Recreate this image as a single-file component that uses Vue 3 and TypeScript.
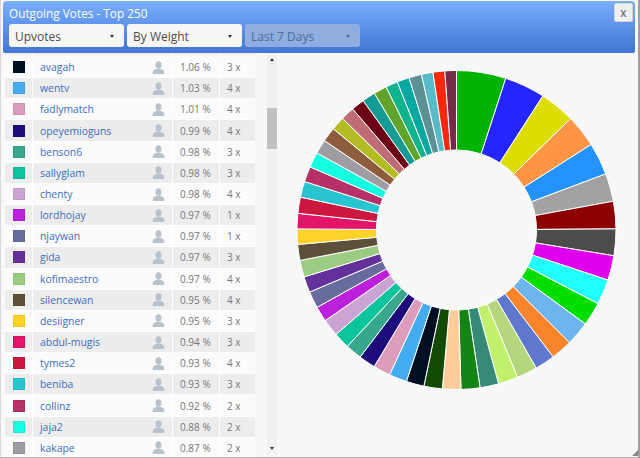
<template>
  <div class="window">
    <header class="head">
      <div class="title">Outgoing Votes - Top 250</div>
      <div class="filters">
        <div v-for="f in filters" :key="f.label" class="select" :class="{ off: f.off }">
          <span>{{ f.label }}</span>
          <i class="caret"></i>
        </div>
      </div>
      <button class="close">x</button>
    </header>
    <div class="body">
      <div class="list">
        <div class="rows">
          <div class="sliver">
            <div class="cell swatch"></div>
            <div class="cell name"></div>
            <div class="cell pct"></div>
            <div class="cell count"></div>
          </div>
          <div v-for="r in rows" :key="r.name" class="row">
            <div class="cell swatch"><i :style="{ background: r.color }"></i></div>
            <div class="cell name">
              <span>{{ r.name }}</span>
              <svg width="13" height="13" viewBox="0 0 14 14">
                <ellipse cx="7" cy="4.2" rx="3.2" ry="3.9" fill="#b9c1ca" />
                <path d="M0.8 14V11.6C0.8 10 3.4 9.2 5 8.4H9C10.6 9.2 13.2 10 13.2 11.6V14Z" fill="#b9c1ca" />
              </svg>
            </div>
            <div class="cell pct">{{ r.pct }} %</div>
            <div class="cell count">{{ r.count }} x</div>
          </div>
        </div>
        <div class="scroll">
          <i class="arrow up"></i>
          <div class="thumb"></div>
          <i class="arrow down"></i>
        </div>
      </div>
      <div class="chart">
        <svg width="360" height="405" viewBox="0 0 360 405">
          <path v-for="s in slices" :key="s.d" :d="s.d" :fill="s.color" stroke="#fff" stroke-width="1" />
        </svg>
      </div>
    </div>
    <i class="grip"></i>
  </div>
</template>

<script setup lang="ts">
const filters = [
  { label: 'Upvotes' },
  { label: 'By Weight' },
  { label: 'Last 7 Days', off: true },
];

const rows = [
  { name: 'avagah', pct: '1.06', count: 3, color: '#001022' },
  { name: 'wentv', pct: '1.03', count: 4, color: '#44acf0' },
  { name: 'fadlymatch', pct: '1.01', count: 4, color: '#dc9cbc' },
  { name: 'opeyemioguns', pct: '0.99', count: 4, color: '#1c0c7c' },
  { name: 'benson6', pct: '0.98', count: 3, color: '#38a88c' },
  { name: 'sallyglam', pct: '0.98', count: 3, color: '#0cc49c' },
  { name: 'chenty', pct: '0.98', count: 4, color: '#cca4d4' },
  { name: 'lordhojay', pct: '0.97', count: 1, color: '#bc20dc' },
  { name: 'njaywan', pct: '0.97', count: 1, color: '#686c9c' },
  { name: 'gida', pct: '0.97', count: 3, color: '#64309c' },
  { name: 'kofimaestro', pct: '0.97', count: 4, color: '#9ccc84' },
  { name: 'silencewan', pct: '0.95', count: 4, color: '#5c5038' },
  { name: 'desiigner', pct: '0.95', count: 3, color: '#ffd228' },
  { name: 'abdul-mugis', pct: '0.94', count: 3, color: '#e41468' },
  { name: 'tymes2', pct: '0.93', count: 4, color: '#cc1840' },
  { name: 'beniba', pct: '0.93', count: 3, color: '#28c4d0' },
  { name: 'collinz', pct: '0.92', count: 2, color: '#b83068' },
  { name: 'jaja2', pct: '0.88', count: 2, color: '#14ffe0' },
  { name: 'kakape', pct: '0.87', count: 2, color: '#a09ca4' },
];

// slice end angles in degrees, clockwise from the top
const parts: [number, string][] = [
  [18, '#00b300'], [32.8, '#2525ff'], [45.7, '#dddd00'], [57.6, '#ff9544'], [69.4, '#2493ff'],
  [79.6, '#a2a2a2'], [89.6, '#8c0000'], [99.3, '#4c4c4c'], [108.3, '#e000ee'], [117.5, '#20ffff'],
  [126.1, '#00df00'], [134.9, '#6db5ee'], [142.7, '#f8842c'], [150, '#5f77cc'], [157.5, '#b4d67c'],
  [164.7, '#c0f06c'], [171.5, '#348a74'], [178.4, '#148414'], [185.1, '#ffcc9c'], [191.8, '#124a04'],
  [198.3, '#001022'], [204.8, '#44acf0'], [211.1, '#dc9cbc'], [217.2, '#1c0c7c'], [223.2, '#38a88c'],
  [229.1, '#0cc49c'], [235.4, '#cca4d4'], [241, '#bc20dc'], [247.1, '#686c9c'], [252.9, '#64309c'],
  [259, '#9ccc84'], [264.8, '#5c5038'], [270.4, '#ffd228'], [276, '#e41468'], [281.9, '#cc1840'],
  [287.7, '#28c4d0'], [293.3, '#b83068'], [298.9, '#14ffe0'], [304.1, '#a09ca4'], [309.4, '#8c5c3c'],
  [314.4, '#b4bc24'], [319.4, '#c06c74'], [324.2, '#6c0014'], [329, '#149c94'], [333.8, '#60a42c'],
  [338.2, '#10b48c'], [342.7, '#04a8a0'], [347.3, '#5c9094'], [351.5, '#58bcc8'], [355.8, '#f8280c'],
  [360, '#782848'],
];

const cx = 179.5;
const cy = 177;
const outer = 159.5;
const inner = 80;

function point(r: number, deg: number) {
  const a = (deg * Math.PI) / 180;
  return `${(cx + r * Math.sin(a)).toFixed(2)} ${(cy - r * Math.cos(a)).toFixed(2)}`;
}

const slices = parts.map(([end, color], i) => {
  const start = i ? parts[i - 1][0] : 0;
  return {
    color,
    d: `M${point(outer, start)}A${outer} ${outer} 0 0 1 ${point(outer, end)}L${point(inner, end)}A${inner} ${inner} 0 0 0 ${point(inner, start)}Z`,
  };
});
</script>

<style scoped>
.window {
  position: relative;
  width: 640px;
  height: 458px;
  box-sizing: border-box;
  padding-top: 1px;
  background: #f8f8f8;
  border-left: 1px solid #d8d8d8;
  border-right: 2px solid #a0a0a0;
  border-bottom: 1px solid #b0b0b0;
  font-family: "Open Sans", sans-serif;
  overflow: hidden;
}

.head {
  position: relative;
  height: 52px;
  box-sizing: border-box;
  margin: 0 3px 0 2px;
  padding: 4px 5.5px 0;
  background: linear-gradient(#7aaeff, #4176d3);
  border-radius: 4px 4px 2px 2px;
}

.title {
  margin-left: 0.5px;
  color: #fff;
  font-size: 11.8px;
  line-height: 17px;
  height: 19px;
}

.filters {
  display: flex;
  gap: 3px;
}

.select {
  width: 115px;
  height: 23px;
  box-sizing: border-box;
  padding: 1px 6.5px 0;
  display: flex;
  align-items: center;
  justify-content: space-between;
  background: #f7f7f7;
  border-radius: 3px;
  color: #4d4d4d;
  font-size: 12px;
}

.select.off {
  background: #8fadde;
  color: #4e6c9f;
}

.caret {
  width: 0;
  height: 0;
  margin-right: 3px;
  border-left: 2.5px solid transparent;
  border-right: 2.5px solid transparent;
  border-top: 3px solid #333;
}

.off .caret {
  border-top-color: #4e6c9f;
}

.close {
  position: absolute;
  top: 2px;
  right: 2px;
  width: 19px;
  height: 19px;
  padding: 0;
  border: 1px solid #d4d4d4;
  border-radius: 2px;
  background: #f0f0f0;
  color: #555;
  font-family: "Open Sans", sans-serif;
  font-size: 12px;
  line-height: 15px;
}

.body {
  display: flex;
  height: 404px;
}

.list {
  width: 276px;
  flex: none;
  display: flex;
  overflow: hidden;
}

.rows {
  width: 250px;
  flex: none;
  margin-left: 4px;
  background: #fbfbfb;
}

.sliver {
  display: flex;
  height: 2.4px;
  margin-bottom: 1.6px;
  background: #eeeeee;
}

.row {
  display: flex;
  height: 21.17px;
  box-sizing: border-box;
  border-bottom: 1px solid #fff;
  font-size: 10.4px;
  color: #777;
}

.row:nth-child(odd) {
  background: #ededed;
}

.cell {
  display: flex;
  align-items: center;
  box-sizing: border-box;
  border-right: 1px solid #fff;
}

.swatch {
  width: 28px;
  justify-content: center;
}

.swatch i {
  width: 12px;
  height: 12px;
  box-sizing: border-box;
  border: 1px solid rgba(0, 0, 0, 0.06);
}

.name {
  width: 140px;
  padding: 0 7px;
  justify-content: space-between;
  color: #3b6cc0;
}

.pct {
  width: 47px;
  padding-left: 7px;
  font-size: 10px;
}

.count {
  width: 35px;
  padding-left: 7px;
  font-size: 10px;
  border: 0;
}

.scroll {
  position: relative;
  width: 10px;
  margin-left: 12px;
  background: #f1f1f1;
}

.arrow {
  position: absolute;
  left: 2.5px;
  border-left: 2.5px solid transparent;
  border-right: 2.5px solid transparent;
}

.arrow.up {
  top: 5px;
  border-bottom: 3px solid #333;
}

.arrow.down {
  bottom: 7px;
  border-top: 3px solid #333;
}

.thumb {
  position: absolute;
  top: 55px;
  left: 0;
  width: 100%;
  height: 41px;
  background: #c1c1c1;
}

.chart {
  flex: 1;
}

.chart svg {
  display: block;
}

.grip {
  position: absolute;
  right: 0;
  bottom: 1px;
  width: 0;
  height: 0;
  border-left: 6px solid transparent;
  border-bottom: 6px solid #888;
}
</style>

<style>
html,
body {
  margin: 0;
  overflow: hidden;
}
</style>
